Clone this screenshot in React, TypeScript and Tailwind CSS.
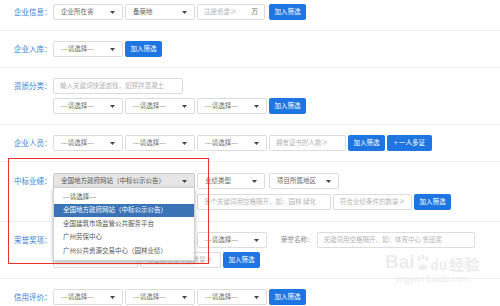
import { ReactNode } from 'react'

const font = { fontFamily: '"Noto Sans CJK SC", "Noto Sans", sans-serif' }

function Caret() {
  return (
    <svg width="5" height="3" viewBox="0 0 5 3" className="shrink-0">
      <path d="M0 0 L5 0 L2.5 3 Z" fill="#444" />
    </svg>
  )
}

function Select({ text, w, open = false }: { text: string; w: string; open?: boolean }) {
  return (
    <div
      className={`${w} h-4 shrink-0 flex items-center justify-between pl-[7px] pr-[7px] border rounded-[2px] text-[6.5px] ${
        open ? 'bg-[#e6e6e6] border-[#c8c8c8] text-[#555]' : 'bg-white border-[#dcdcdc] text-[#666]'
      }`}
    >
      <span className="whitespace-nowrap">{text}</span>
      <Caret />
    </div>
  )
}

function Input({ ph, w, suffix }: { ph: string; w: string; suffix?: string }) {
  return (
    <div className={`${w} h-4 shrink-0 flex items-center justify-between px-[6px] border border-[#dcdcdc] rounded-[2px] bg-white text-[6.5px]`}>
      <span className="text-[#b4b4b4] whitespace-nowrap">{ph}</span>
      {suffix && <span className="text-[#666]">{suffix}</span>}
    </div>
  )
}

function Btn({ text, w = 'w-[37px]' }: { text: string; w?: string }) {
  return (
    <div className={`${w} h-4 shrink-0 flex items-center justify-center rounded-[2px] bg-[#1f76e3] text-white text-[6.5px] whitespace-nowrap`}>
      {text}
    </div>
  )
}

function Section({ label, children, cls = 'pt-[10px] pb-[10px]' }: { label: string; children: ReactNode; cls?: string }) {
  return (
    <div className={`flex border-b border-[#eeeeee] ${cls}`}>
      <div className="w-[53px] shrink-0 pl-[14px] h-4 flex items-center text-[7.5px] text-[#3b80d8] whitespace-nowrap">
        {label}
      </div>
      <div className="flex flex-col gap-[4px]">{children}</div>
    </div>
  )
}

const opts = ['---请选择---', '全国地方政府网站（中标公示公告）', '全国建筑市场监管公共服务平台', '广州劳保中心', '广州公共资源交易中心（园林业绩）']

export default function App() {
  return (
    <div className="relative w-[500px] h-[306px] overflow-hidden bg-white" style={font}>
      <Section label="企业信息：" cls="pt-[4px] pb-[10px]">
        <div className="flex items-center gap-[2px]">
          <Select text="企业所在省" w="w-[70px]" />
          <Select text="备案地" w="w-[70px]" />
          <Input ph="注册资金≥" w="w-[68px]" suffix="万" />
          <div className="ml-[2px]">
            <Btn text="加入筛选" />
          </div>
        </div>
      </Section>

      <Section label="企业入库：">
        <div className="flex items-center gap-[2px]">
          <Select text="---请选择---" w="w-[70px]" />
          <Btn text="加入筛选" />
        </div>
      </Section>

      <Section label="资质分类：">
        <Input ph="输入关键词快速查找，如预拌混凝土" w="w-[130px]" />
        <div className="flex items-center gap-[2px]">
          <Select text="---请选择---" w="w-[70px]" />
          <Select text="---请选择---" w="w-[70px]" />
          <Select text="---请选择---" w="w-[70px]" />
          <Btn text="加入筛选" />
        </div>
      </Section>

      <Section label="企业人员：">
        <div className="flex items-center gap-[2px]">
          <Select text="---请选择---" w="w-[70px]" />
          <Select text="---请选择---" w="w-[70px]" />
          <Select text="---请选择---" w="w-[70px]" />
          <Input ph="拥有证书的人数≥" w="w-[77px]" />
          <Btn text="加入筛选" />
          <Btn text="+ 一人多证" w="w-[45px]" />
        </div>
      </Section>

      <Section label="中标业绩：" cls="pt-[11px] pb-[11px]">
        <div className="flex items-center gap-[2px]">
          <Select text="全国地方政府网站（中标公示公告）" w="w-[142px]" open />
          <Select text="业绩类型" w="w-[68px]" />
          <div className="ml-[2px]">
            <Select text="项目所属地区" w="w-[70px]" />
          </div>
        </div>
        <div className="flex items-center gap-[2px] mt-[1px]">
          <Input ph="" w="w-[142px]" />
          <Input ph="多个关键词用空格隔开，如：园林 绿化" w="w-[134px]" />
          <Input ph="符合业绩条件的数量≥" w="w-[79px]" />
          <Btn text="加入筛选" />
        </div>
      </Section>

      <Section label="荣誉奖项：">
        <div className="flex items-center gap-[2px]">
          <Select text="---请选择---" w="w-[142px]" />
          <Select text="---请选择---" w="w-[70px]" />
          <span className="ml-[12px] mr-[1px] text-[6.5px] text-[#888] whitespace-nowrap">荣誉名称：</span>
          <Input ph="关键词用空格隔开，如：体育中心 鲁班奖" w="w-[158px]" />
        </div>
        <div className="flex items-center gap-[2px]">
          <Input ph="" w="w-[85px]" />
          <Input ph="符合荣誉条件的数量≥" w="w-[81px]" />
          <Btn text="加入筛选" />
        </div>
      </Section>

      <Section label="信用评价：">
        <div className="flex items-center gap-[2px]">
          <Select text="---请选择---" w="w-[70px]" />
          <Select text="---请选择---" w="w-[70px]" />
          <Select text="---请选择---" w="w-[70px]" />
          <Btn text="加入筛选" />
        </div>
      </Section>

      {/* open dropdown list */}
      <div className="absolute left-[53px] top-[187px] w-[142px] bg-white border border-[#cfcfcf] shadow-[0_2px_4px_rgba(0,0,0,0.25)] py-[2px] text-[6.5px] text-[#555]">
        {opts.map((o, i) => (
          <div
            key={o}
            className={`h-[13.5px] flex items-center pl-[9px] whitespace-nowrap ${i === 1 ? 'bg-[#3a74b6] text-white' : ''}`}
          >
            {o}
          </div>
        ))}
      </div>

      {/* red annotation box */}
      <div className="absolute left-[8px] top-[158px] w-[201px] h-[106px] border-[1.5px] border-[#e8342f]" />

      {/* watermark */}
      <div className="absolute left-[385px] top-[252px] flex flex-col items-center text-[#ececec] pointer-events-none">
        <div className="flex items-end leading-none">
          <span className="text-[19px] font-bold" style={{ fontFamily: 'Arial, "Liberation Sans", sans-serif' }}>Bai</span>
          <svg width="14" height="17" viewBox="0 0 18 20" className="mx-[1px]">
            <ellipse cx="4" cy="5" rx="2" ry="3" fill="#ededed" />
            <ellipse cx="9" cy="3" rx="2" ry="3" fill="#ededed" />
            <ellipse cx="14" cy="5" rx="2" ry="3" fill="#ededed" />
            <path d="M3 17 C3 11 15 11 15 17 C15 20 3 20 3 17 Z" fill="#ededed" />
          </svg>
          <span className="text-[13px] font-bold mr-[2px]">du</span>
          <span className="text-[15px] font-bold">经验</span>
        </div>
        <span className="text-[9px] mt-[2px]" style={{ fontFamily: 'Arial, "Liberation Sans", sans-serif' }}>jingyan.baidu.com</span>
      </div>
    </div>
  )
}
